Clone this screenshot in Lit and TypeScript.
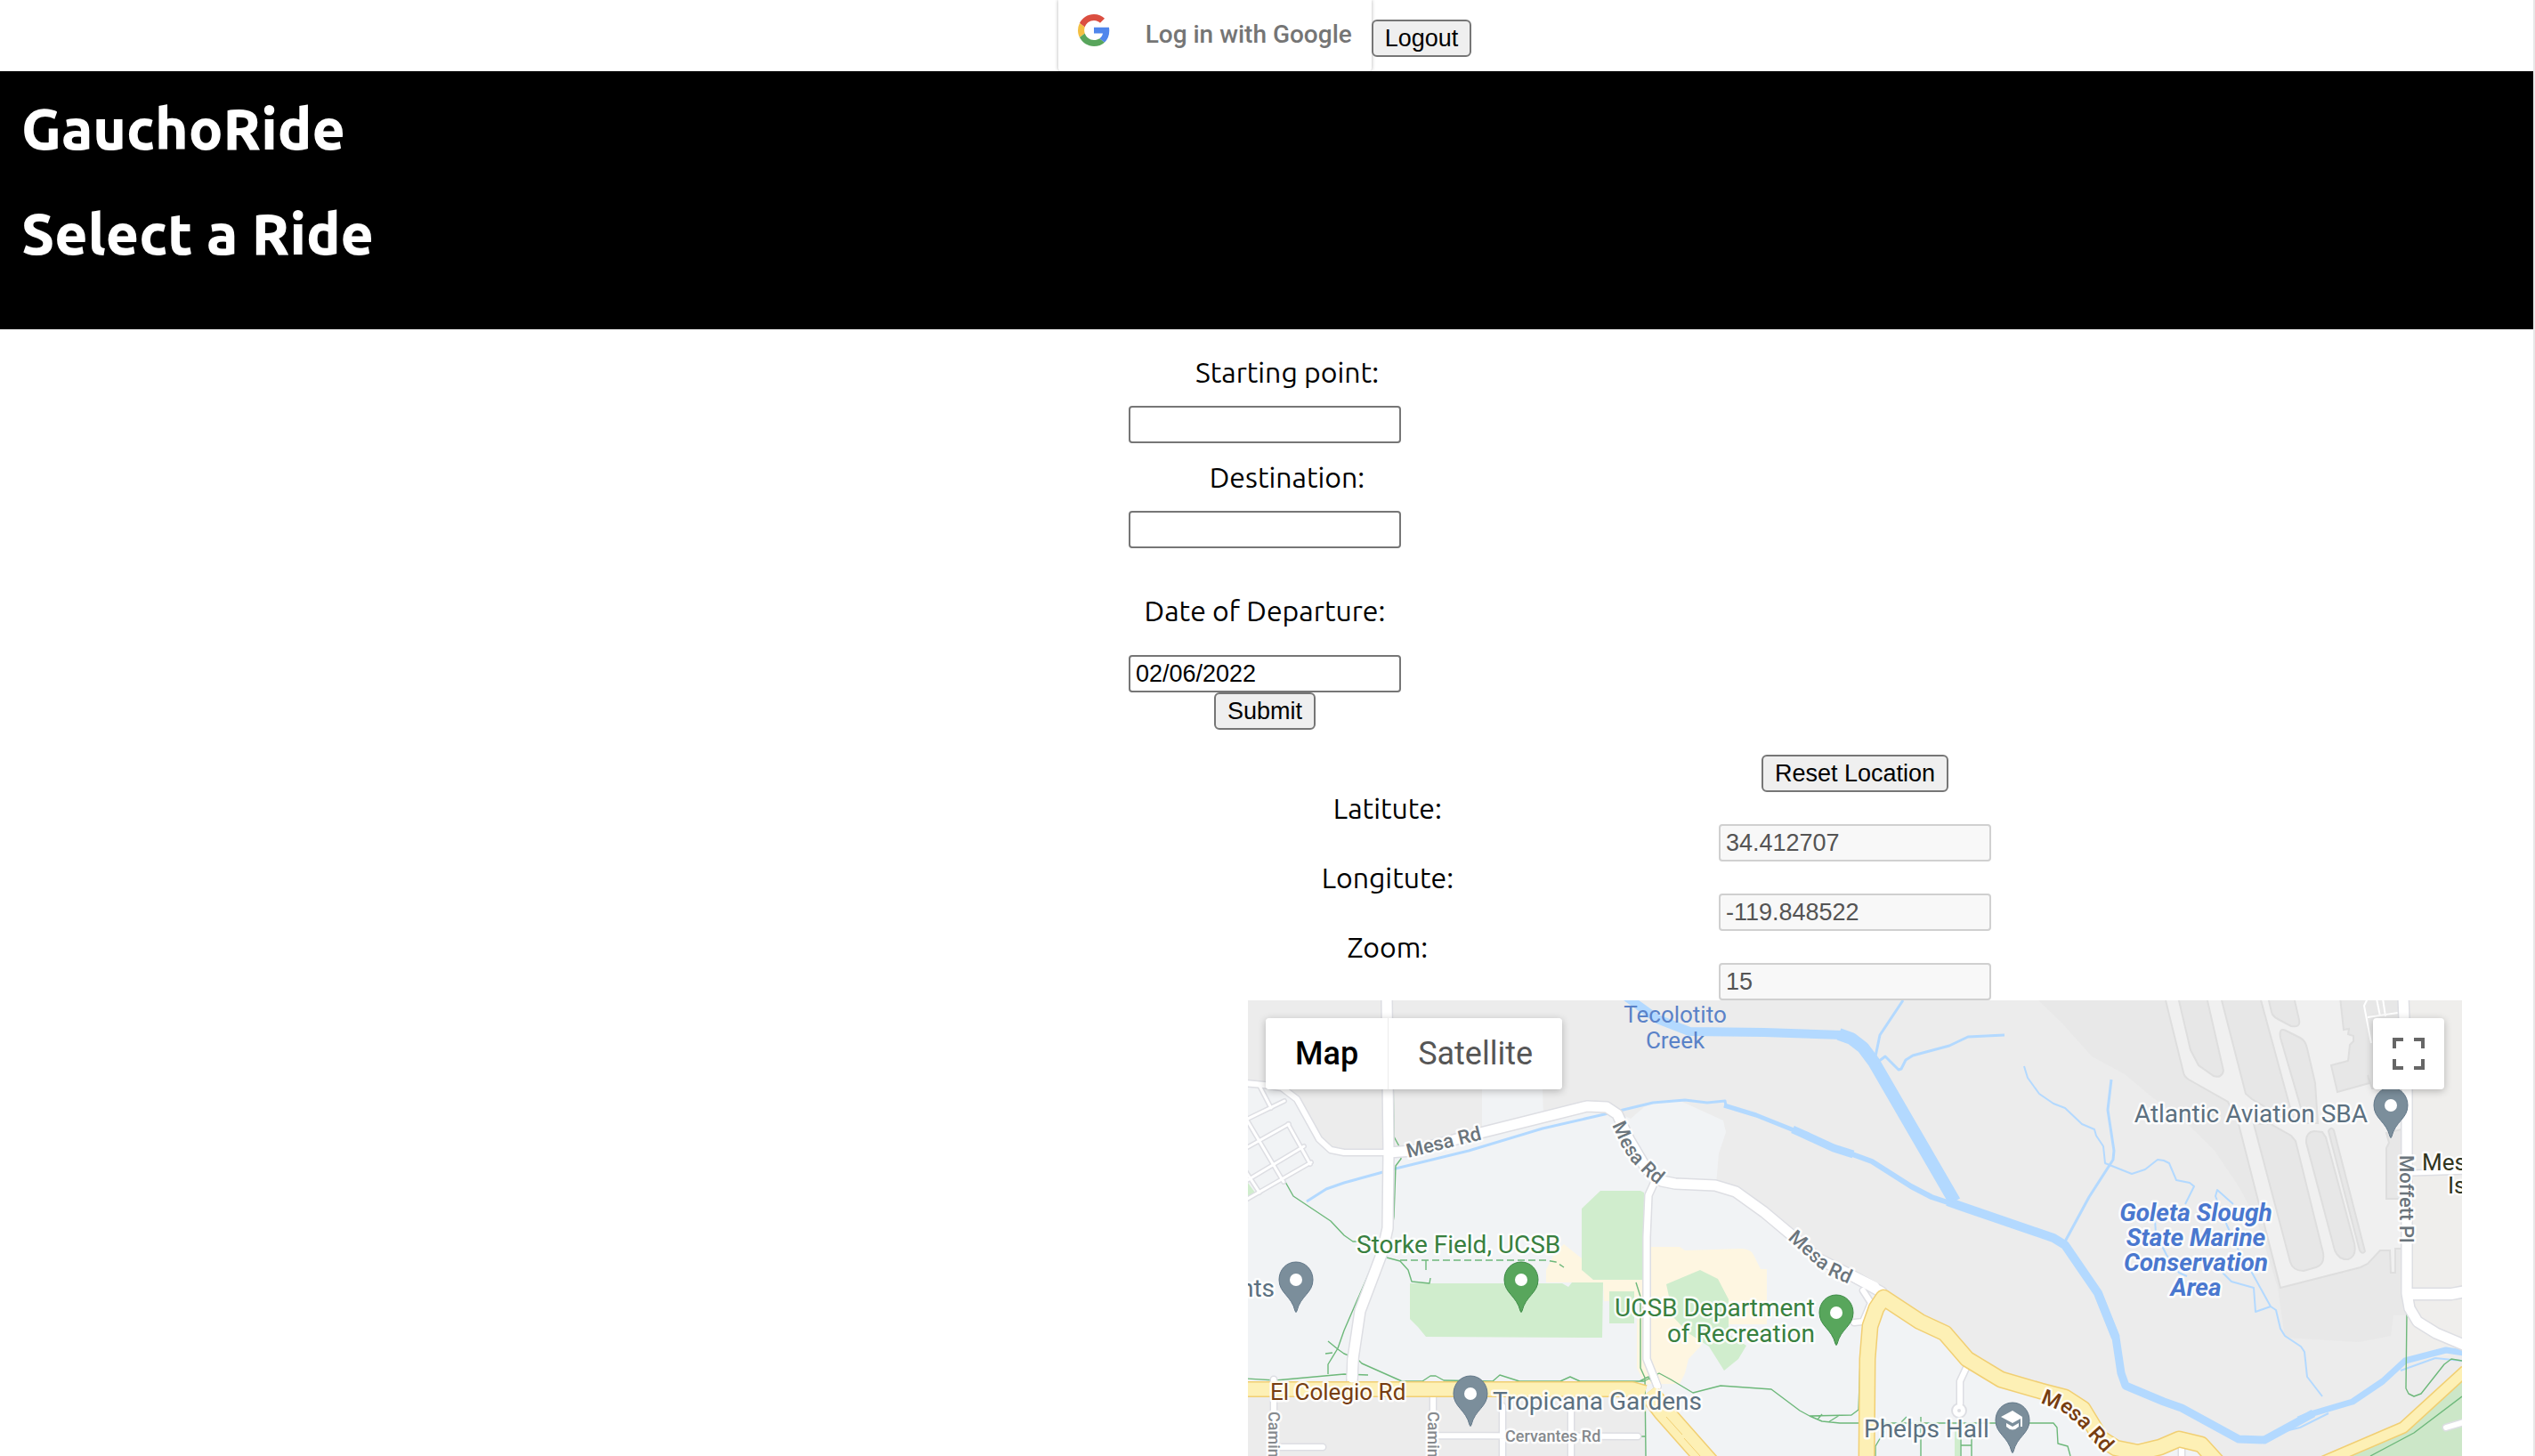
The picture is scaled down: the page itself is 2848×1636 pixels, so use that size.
import { LitElement, html, css, svg } from "lit";
import { customElement, state } from "lit/decorators.js";

type Pin = { x: number; y: number; kind: "slate" | "green" | "school" };
type Label = {
  text: string;
  x: number;
  y: number;
  tone: string;
  anchor?: "start" | "middle" | "end";
  rotate?: number;
};

const WATER = [
  { w: 10, d: "M425-4L460 21L496 35L580 36L668 39" },
  { w: 14, d: "M664 38L678 43L691 53L703 69L794 226" },
  { w: 10, d: "M786 226L800 231L905 267L918 275L955 329L975 379" },
  { w: 9, d: "M955 329L975 379L981 419L986 433L1029 451L1049 458L1113 493L1142 494L1197 464" },
  { w: 7, d: "M1180 471L1197 464L1241 451L1275 428L1300 405L1346 393L1366 396" },
  { w: 3, d: "M66 226L88 212L108 205L148 194L166 189L248 169L331 144L405 127L455 115L491 112L516 115L536 113L537 118" },
  { w: 5, d: "M535 118L571 129L621 149" },
  { w: 9, d: "M612 145L621 149L658 166L680 173" },
  { w: 6, d: "M660 166L701 181L745 209L768 221L792 229" },
  { w: 3, d: "M736 0L710 39L705 63M708 69L716 63L731 78L734 77L739 67L747 62L788 51L809 41L850 39" },
  {
    w: 2,
    d: "M872 74L876 87L889 105L905 116L918 121L937 139L951 145L953 152L961 164L963 183L993 195L1008 190L1022 179L1029 180L1035 183L1043 202L1058 205L1063 209L1053 229",
  },
  { w: 3, d: "M970 89L966 123L973 169L972 179L945 221L918 271" },
  {
    w: 2,
    d: "M1107 229L1089 213L1087 220L1100 253L1112 279L1128 306L1149 344L1155 348L1160 369L1165 377L1183 389L1187 395L1190 423L1207 445M1149 344L1132 350L1130 323L1105 316L1095 306M1019 246L1020 262L1032 286L1046 306L1055 310",
  },
  { w: 2, d: "M1157 486L1182 480L1214 464M1295 416L1334 402L1364 405" },
];

const ROADS = [
  { w: 3, d: "M13 96L26 121M-2 134L41 113M-2 166L46 139M-2 133L40 204M45 139L70 184M-2 203L63 164M-2 224L71 182M-2 193L13 216" },
  { w: 6, d: "M29 426V520M208 446V520M286 456V520M363 459V520M208 489L438 490M28 502H84" },
  { w: 6, d: "M-4 93L18 95L38 98L55 111L80 156L93 168L108 171H158" },
  { w: 7, d: "M456 206L450 219L448 266V403L456 423L460 434" },
  { w: 11, d: "M156-4L158 171L157 256L151 283L126 349L118 403L117 429" },
  {
    w: 11,
    d: "M158 171L185 169L265 148L381 119L403 120L415 128L428 156L448 190L465 203L480 206L525 208L548 215L580 238L611 264L640 290L678 309L712 328",
  },
  { w: 6, d: "M691 326L700 340L691 361L681 362M807 413L800 428V453M1049 503V520M1346 480L1366 474" },
  { w: 5, d: "M1308 194L1368 192" },
  { w: 12, d: "M1306 330L1352 330L1368 327" },
  { w: 11, d: "M1298-4L1302 99V329L1305 346L1314 361L1335 374L1368 388" },
];

const HIGHWAYS = [
  { w: 15, d: "M-4 437H432L446 441" },
  { w: 21, d: "M450 440L466 461L520 522" },
  { w: 16, d: "M695 520L696 403L699 366L706 346L714 334L755 361L783 374L808 403L846 426L891 439L918 446L938 459L958 492L975 503L1000 508L1025 502L1046 493L1071 499L1090 520" },
  { w: 11, d: "M1200 522L1221 513L1298 480L1368 416" },
];

const TRAILS =
  "M162 0L164 153L171 166L172 178L166 186L164 243L161 262L155 288M42 204L51 220L93 248L108 264L118 271H141" +
  "M156 289L171 293L180 303L184 316L204 318L205 312M200 292V303M144 288L108 371L101 391L90 409V420" +
  "M90 383L101 392L108 397L123 403L128 408L173 428H196L205 422H211L220 427L275 428L283 421L305 428H351L362 423L373 428H445L462 419L475 426L500 441L531 433L588 437L620 461L631 467L678 466L686 460L688 404" +
  "M87 397L95 396M-2 425L31 427L108 420L135 421M436 317L441 333V413L446 424L447 512M440 428L450 423L455 430M438 490H447" +
  "M631 467L645 473L665 475H905L909 480L910 498L921 501L924 512M645 465L640 471M652 474L665 466M756 468V512M705 512V501L715 484M801 486V512M813 486V512M801 500H813M734 474L740 468" +
  "M1302 351L1301 436L1304 442L1310 445L1318 442L1344 409L1352 403L1364 405M1261 512L1310 486L1364 445";

const ISLANDS = [
  "M1045-4L1059 56L1068 73L1085 85Q1094 88 1096 79L1077-4Z",
  "M1093-4L1121 105L1128 111L1165 133L1174 132L1137-4Z",
  "M1130 139L1171 294Q1174 304 1186 304L1200 300Q1210 297 1208 284L1177 158L1172 152L1149 139Z",
  "M1146-4L1150 13Q1151 18 1157 21L1172 29Q1183 31 1181 22L1175-4Z",
  "M1160 42Q1158 30 1166 34L1182 42Q1188 45 1190 54L1199 93L1202 138H1188Z",
  "M1189 160Q1188 148 1198 147L1207 148L1211 154L1243 273Q1246 288 1236 291Q1226 292 1221 281Z",
  "M1214 147Q1217 141 1220 146L1255 282Q1252 286 1249 281Z",
  "M1227-4L1231 33L1237 32L1236 38L1242 40V46L1238 50L1236 68L1217 73L1224 103L1260 93L1258 84L1263 99H1294V-4Z",
  "M1279 149L1282 160L1279 166V223H1296V145Z",
];

const LABELS: Label[] = [
  { text: "Tecolotito", x: 480, y: 25, tone: "creek", anchor: "middle" },
  { text: "Creek", x: 480, y: 54, tone: "creek", anchor: "middle" },
  { text: "Mesa Rd", x: 180, y: 177, tone: "road", rotate: -14 },
  { text: "Storke Field, UCSB", x: 122, y: 284, tone: "park" },
  { text: "UCSB Department", x: 637, y: 355, tone: "park", anchor: "end" },
  { text: "of Recreation", x: 637, y: 384, tone: "park", anchor: "end" },
  { text: "El Colegio Rd", x: 25, y: 449, tone: "highway" },
  { text: "Tropicana Gardens", x: 275, y: 460, tone: "place" },
  { text: "Cervantes Rd", x: 289, y: 496, tone: "street" },
  { text: "Camin", x: 23, y: 462, tone: "street", rotate: 90 },
  { text: "Camin", x: 202, y: 462, tone: "street", rotate: 90 },
  { text: "nts", x: 30, y: 333, tone: "place", anchor: "end" },
  { text: "Phelps Hall", x: 692, y: 491, tone: "place" },
  { text: "Atlantic Aviation SBA", x: 1258, y: 137, tone: "place", anchor: "end" },
  { text: "Mes", x: 1319, y: 191, tone: "town" },
  { text: "Is", x: 1348, y: 217, tone: "town" },
  { text: "Moffett Pl", x: 1294, y: 174, tone: "road", rotate: 90 },
  { text: "Goleta Slough", x: 1065, y: 248, tone: "reserve", anchor: "middle" },
  { text: "State Marine", x: 1065, y: 276, tone: "reserve", anchor: "middle" },
  { text: "Conservation", x: 1065, y: 304, tone: "reserve", anchor: "middle" },
  { text: "Area", x: 1065, y: 332, tone: "reserve", anchor: "middle" },
];

const PINS: Pin[] = [
  { x: 54, y: 314, kind: "slate" },
  { x: 307, y: 314, kind: "green" },
  { x: 250, y: 442, kind: "slate" },
  { x: 661, y: 351, kind: "green" },
  { x: 859, y: 472, kind: "school" },
  { x: 1284, y: 118, kind: "slate" },
];

@customElement("ride-map")
export class RideMap extends LitElement {
  @state() private view: "map" | "satellite" = "map";

  static styles = css`
    :host {
      display: block;
      position: relative;
      overflow: hidden;
      min-height: 512px;
      background: #ececec;
      font-family: Roboto, "Liberation Sans", sans-serif;
    }
    .canvas {
      position: absolute;
      inset: 0;
      width: 100%;
      height: 100%;
    }
    .line {
      fill: none;
      stroke-linejoin: round;
    }
    .round {
      stroke-linecap: round;
    }
    .water {
      stroke: #b3d9ff;
    }
    .casing {
      stroke: #dddee3;
    }
    .road-fill {
      stroke: #fff;
    }
    .hw-casing {
      stroke: #f1cf73;
    }
    .hw-fill {
      stroke: #fdf0b5;
    }
    .trail {
      stroke: #6db87a;
    }
    .land {
      fill: #f1f3f5;
    }
    .sand {
      fill: #fef6e1;
    }
    .grass {
      fill: #d0edcd;
    }
    .airport {
      fill: #e8e8e8;
    }
    .apron {
      fill: #f0f0f0;
    }
    .island {
      fill: #e7e7e7;
    }
    .edge {
      stroke: #dedede;
      stroke-width: 2px;
    }
    .label {
      paint-order: stroke;
      stroke: #fff;
      stroke-opacity: 0.85;
      stroke-width: 5px;
      stroke-linejoin: round;
      font-size: 28px;
    }
    .creek {
      fill: #5a82c8;
      font-size: 26px;
      stroke: none;
    }
    .road {
      fill: #6b757c;
      font-size: 22px;
      font-weight: 500;
    }
    .street {
      fill: #85898d;
      font-size: 18px;
      font-weight: 500;
    }
    .park {
      fill: #38803f;
    }
    .place {
      fill: #5b7080;
    }
    .highway {
      fill: #773d10;
      font-size: 26px;
    }
    .highway-small {
      fill: #773d10;
      font-size: 24px;
      font-weight: 500;
    }
    .town {
      fill: #30351f;
      font-size: 26px;
    }
    .reserve {
      fill: #4a78cf;
      font-style: italic;
      font-weight: 700;
    }
    .pin-slate {
      fill: #7b8e9b;
      stroke: #64798a;
    }
    .pin-green {
      fill: #58a65c;
      stroke: #3f8c48;
    }
    .types {
      position: absolute;
      top: 20px;
      left: 20px;
      display: flex;
      border-radius: 4px;
      box-shadow: 0 2px 8px rgba(0, 0, 0, 0.25);
    }
    .type {
      height: 80px;
      padding: 0 33px;
      border: 0;
      background: #fff;
      color: #565656;
      font-family: inherit;
      font-size: 36px;
    }
    .type:first-child {
      border-radius: 4px 0 0 4px;
    }
    .type:last-child {
      border-left: 1px solid #ececec;
      border-radius: 0 4px 4px 0;
    }
    .type.active {
      color: #000;
      font-weight: 500;
    }
    .fullscreen {
      position: absolute;
      top: 20px;
      right: 20px;
      display: grid;
      place-items: center;
      width: 80px;
      height: 80px;
      padding: 0;
      border: 0;
      border-radius: 4px;
      background: #fff;
      box-shadow: 0 2px 8px rgba(0, 0, 0, 0.25);
    }
  `;

  private pin(p: Pin) {
    return svg`<g transform="translate(${p.x} ${p.y})">
      <path class=${p.kind === "green" ? "pin-green" : "pin-slate"} d="M0-20C-11-20-19-11-19 0C-19 15-5 18-1 35Q0 38 1 35C5 18 19 15 19 0C19-11 11-20 0-20Z"/>
      ${
        p.kind === "school"
          ? svg`<path fill="#fff" d="M0-11L-13-4L0 3L9-2V7H11V-4ZM-7 3V7Q0 14 7 7V3L0 7Z"/>`
          : svg`<circle r="7" fill="#fff"/>`
      }
    </g>`;
  }

  private label(l: Label) {
    return svg`<text class="label ${l.tone}" text-anchor=${l.anchor ?? "start"}
      transform="translate(${l.x} ${l.y}) rotate(${l.rotate ?? 0})">${l.text}</text>`;
  }

  render() {
    return html`
      <svg class="canvas" viewBox="0 0 1364 512" preserveAspectRatio="xMinYMin slice" role="img" aria-label="Map">
        <path class="land" d="M0 94L18 95L38 98L55 111L80 156L93 168L108 171H158L185 169L263 148V100H331L332 130L403 120L430 133L445 120L458 114H488L534 135L537 148L529 172L526 207L548 215L611 264L716 330L755 361L783 374L808 403L846 426L918 446L968 499L1046 493L1090 512H447V440H0Z" />
        <path class="airport" d="M888 0L915 26L948 63L985 83L1016 109L1053 136L1086 169L1113 209L1133 246L1157 323L1165 379L1248 384L1284 377L1287 354H1302V0Z" />
        <path fill="#efeeec" d="M1300 0H1364V396L1302 406Z" />
        <path class="apron edge" d="M1030-4L1051 81Q1052 86 1057 89L1101 114L1113 139L1160 323L1250 300L1258 296L1272 281H1283L1284 306H1289V279H1297V-4Z" />
        ${ISLANDS.map((d) => svg`<path class="island edge" d=${d}/>`)}
        <path class="sand" d="M355 274L375 290L388 314H444L445 338H400L399 317H335V303L345 283ZM453 277H485L491 281L555 279Q566 280 568 286L576 302H583V364H525L508 389L495 403L491 419L485 431H446L437 413V360Z" />
        <path class="grass" d="M396 214H441L445 216L444 314H388L375 303V234ZM182 318H353L360 322L364 317H399L398 379L200 378L191 367L182 358ZM406 327H434V363H406ZM508 303L528 313L540 336V375L560 388L551 403L535 416L518 389L495 374L478 356L470 319ZM0 205L8 216L0 221ZM794 482H800V512H794Z" />
        <path fill="#cce7c8" d="M1235 512L1300 482L1364 424V512Z" />
        ${WATER.map((r) => svg`<path class="line water" stroke-width=${r.w} d=${r.d}/>`)}
        <path class="line trail" stroke-width="1.4" d=${TRAILS} />
        <path class="line trail" stroke-width="1.4" stroke-dasharray="8 4" d="M171 292H335L346 294L355 300" />
        <g class="line" fill="none" stroke-width="2" stroke="#fff">
          <path d="M1258 -2L1254 6L1262 48M1258 19L1292 14M1268 -2L1272 18M1275 -2L1278 18" />
        </g>
        ${ROADS.map((r) => svg`<path class="line round casing" stroke-width=${r.w + 3} d=${r.d}/>`)}
        <circle cx="799" cy="461" r="8" fill="#fff" stroke="#dddee3" stroke-width="2" />
        ${ROADS.map((r) => svg`<path class="line round road-fill" stroke-width=${r.w} d=${r.d}/>`)}
        <circle cx="799" cy="461" r="2" fill="#dddee3" />
        ${HIGHWAYS.map((r) => svg`<path class="line hw-casing" stroke-width=${r.w + 3} d=${r.d}/>`)}
        ${HIGHWAYS.map((r) => svg`<path class="line hw-fill" stroke-width=${r.w} d=${r.d}/>`)}
        <path class="line hw-casing" stroke-width="1" d="M470 468L488 488M490 492L508 512" />
        <path class="line round road-fill" stroke-width="7" d="M456 423L460 433" />
        <path class="line round road-fill" stroke-width="11" d="M118 403L117 424M678 309L704 322" />
        <path class="line round road-fill" stroke-width="6" d="M29 449V470M208 449V470" />
        ${LABELS.map((l) => this.label(l))}
        <defs>
          <path id="bend-a" d="M409 140L421 166L431 181L446 196L466 212" />
          <path id="bend-b" d="M606 268L625 285L641 300L655 310L682 322" />
          <path id="bend-c" d="M890 452L915 462L934 478L972 520" />
        </defs>
        <text class="label road"><textPath href="#bend-a">Mesa Rd</textPath></text>
        <text class="label road"><textPath href="#bend-b">Mesa Rd</textPath></text>
        <text class="label highway-small"><textPath href="#bend-c">Mesa Rd</textPath></text>
        ${PINS.map((p) => this.pin(p))}
      </svg>
      <div class="types">
        <button class="type ${this.view === "map" ? "active" : ""}" @click=${() => (this.view = "map")}>Map</button>
        <button class="type ${this.view === "satellite" ? "active" : ""}" @click=${() => (this.view = "satellite")}>Satellite</button>
      </div>
      <button class="fullscreen" aria-label="Toggle fullscreen view">
        <svg width="36" height="36" viewBox="0 0 18 18">
          <path fill="#666" d="M0 0v6h2V2h4V0H0zm16 0h-4v2h4v4h2V0h-2zm0 16h-4v2h6v-6h-2v4zM2 12H0v6h6v-2H2v-4z" />
        </svg>
      </button>
    `;
  }
}

@customElement("app-root")
export class AppRoot extends LitElement {
  static styles = css`
    :host {
      display: block;
      box-sizing: border-box;
      min-height: 100vh;
      border-right: 2px solid #e8e8e8;
      background: #fff;
      color: #000;
      font-family: Ubuntu, "Noto Sans", sans-serif;
      font-size: 32px;
      line-height: 36px;
    }
    .page {
      display: flex;
      flex-direction: column;
      min-height: 100vh;
    }
    .auth {
      display: flex;
      justify-content: center;
      height: 80px;
      padding-right: 4px;
      overflow: hidden;
    }
    .google {
      display: flex;
      align-items: center;
      gap: 40px;
      height: 80px;
      padding: 0 22px 4px;
      border: 0;
      border-radius: 0 0 4px 4px;
      background: #fff;
      box-shadow: 0 0 4px rgba(0, 0, 0, 0.3);
      color: #757575;
      font-family: Roboto, sans-serif;
      font-size: 28px;
      font-weight: 500;
    }
    .g-logo {
      display: block;
      margin-bottom: 8px;
    }
    .button {
      box-sizing: border-box;
      height: 42px;
      padding: 0 13px;
      border: 2px solid #767676;
      border-radius: 6px;
      background: #efefef;
      color: #000;
      font-family: "Liberation Sans", Arial, sans-serif;
      font-size: 27px;
      line-height: 36px;
    }
    .auth .button {
      margin-top: 22px;
    }
    .banner {
      box-sizing: border-box;
      height: 290px;
      padding: 24px 24px 0;
      background: #000;
      color: #fff;
    }
    .title {
      margin: 0 0 38px;
      font-size: 64px;
      font-weight: 800;
      line-height: 80px;
    }
    .search {
      display: flex;
      flex-direction: column;
      align-items: center;
      padding: 30px 4px 28px 0;
    }
    .caption {
      padding: 0 0 20px;
    }
    .caption.place {
      padding-left: 50px;
    }
    .date-caption {
      padding: 52px 0 32px;
    }
    .field {
      box-sizing: border-box;
      width: 306px;
      height: 42px;
      padding: 0 6px;
      border: 2px solid #767676;
      border-radius: 4px;
      background: #fff;
      color: #000;
      font-family: "Liberation Sans", Arial, sans-serif;
      font-size: 27px;
    }
    .field:disabled {
      border-color: #d0d0d0;
      background: #f8f8f8;
      color: #545454;
    }
    .field + .caption {
      padding-top: 20px;
    }
    .location {
      display: flex;
      flex: 1;
      flex-direction: column;
      margin: 0 80px 0 calc(50% - 21px);
    }
    .reset {
      align-self: center;
    }
    .row {
      display: grid;
      grid-template-columns: 23% 54% 23%;
      grid-template-rows: 36px 42px;
      justify-items: center;
    }
    .row .field {
      grid-area: 2 / 2;
    }
    .map {
      flex: 1;
    }
  `;

  private readonly position = [
    { id: "lat", name: "Latitute:", value: "34.412707" },
    { id: "lng", name: "Longitute:", value: "-119.848522" },
    { id: "zoom", name: "Zoom:", value: "15" },
  ];

  render() {
    return html`
      <div class="page">
        <div class="auth">
          <button class="google">
            <svg class="g-logo" width="36" height="36" viewBox="0 0 18 18" aria-hidden="true">
              <path fill="#DB4E40" d="M9 3.48c1.69 0 2.83.73 3.48 1.34l2.54-2.48C13.46.89 11.43 0 9 0 5.48 0 2.44 2.02.96 4.96l2.91 2.26C4.6 5.05 6.62 3.48 9 3.48z" />
              <path fill="#5086EC" d="M17.64 9.2c0-.74-.06-1.28-.19-1.84H9v3.34h4.96c-.1.83-.64 2.08-1.84 2.92l2.84 2.2c1.7-1.57 2.68-3.88 2.68-6.62z" />
              <path fill="#F3BF42" d="M3.88 10.78A5.54 5.54 0 0 1 3.58 9c0-.62.11-1.22.29-1.78L.96 4.96A9.008 9.008 0 0 0 0 9c0 1.45.35 2.82.96 4.04l2.92-2.26z" />
              <path fill="#58A55C" d="M9 18c2.43 0 4.47-.8 5.96-2.18l-2.84-2.2c-.76.53-1.78.9-3.12.9-2.38 0-4.4-1.57-5.12-3.74L.97 13.04C2.45 15.98 5.48 18 9 18z" />
            </svg>
            <span>Log in with Google</span>
          </button>
          <button class="button">Logout</button>
        </div>
        <header class="banner">
          <h1 class="title">GauchoRide</h1>
          <h1 class="title">Select a Ride</h1>
        </header>
        <form class="search" @submit=${(e: Event) => e.preventDefault()}>
          <label class="caption place" for="start">Starting point:</label>
          <input class="field" id="start" type="text" />
          <label class="caption place" for="end">Destination:</label>
          <input class="field" id="end" type="text" />
          <label class="date-caption" for="date">Date of Departure:</label>
          <input class="field" id="date" type="text" value="02/06/2022" />
          <button class="button" type="submit">Submit</button>
        </form>
        <section class="location">
          <button class="button reset">Reset Location</button>
          ${this.position.map(
            (p) => html`<div class="row">
              <label for=${p.id}>${p.name}</label>
              <input class="field" id=${p.id} type="text" .value=${p.value} disabled />
            </div>`
          )}
          <ride-map class="map"></ride-map>
        </section>
      </div>
    `;
  }
}
